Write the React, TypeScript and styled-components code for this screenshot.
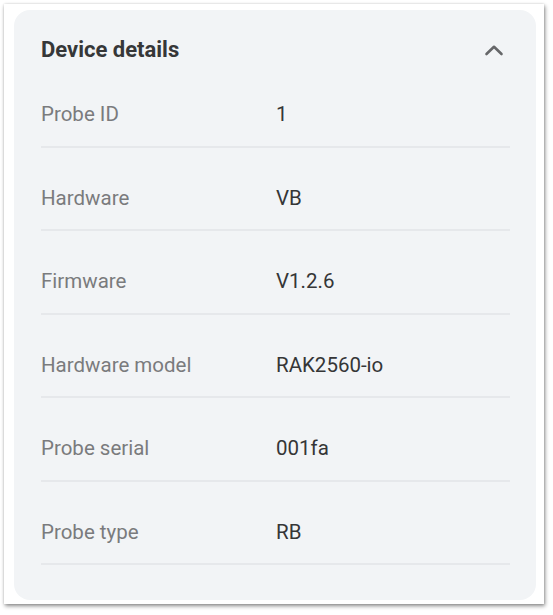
import React from "react";
import styled, { createGlobalStyle } from "styled-components";

const GlobalStyle = createGlobalStyle`
  html, body {
    margin: 0;
    padding: 0;
    background: #ffffff;
  }
  body {
    font-family: Roboto, "Liberation Sans", sans-serif;
    -webkit-font-smoothing: antialiased;
  }
`;

const Page = styled.div`
  width: 553px;
  height: 615px;
  padding: 4px 9px 11px 4px;
  box-sizing: border-box;
  background: #ffffff;
`;

const Frame = styled.div`
  height: 600px;
  box-sizing: border-box;
  background: #ffffff;
  box-shadow: 1px 2px 4px rgba(0, 0, 0, 0.45), 0 0 2px rgba(0, 0, 0, 0.12);
  padding: 6px 8px 4px 10px;
`;

const Card = styled.section`
  height: 100%;
  box-sizing: border-box;
  background: #f2f4f6;
  border-radius: 16px;
  padding: 0 26px 0 27px;
  display: flex;
  flex-direction: column;
`;

const Header = styled.div`
  display: flex;
  align-items: center;
  justify-content: space-between;
  padding: 26px 6px 0 0;
  height: 28px;
  box-sizing: content-box;
`;

const Title = styled.h2`
  margin: 0;
  font-size: 22px;
  line-height: 28px;
  font-weight: 700;
  color: #363738;
  letter-spacing: 0;
`;

const Chevron = styled.svg`
  width: 20px;
  height: 14px;
  display: block;
`;

const Row = styled.div`
  display: grid;
  grid-template-columns: 235px 1fr;
  align-items: center;
  padding: 38px 0 19.5px;
  border-bottom: 2px solid #e6e8eb;
`;

const Label = styled.span`
  font-size: 20.5px;
  line-height: 24px;
  color: #7a7b7d;
  font-weight: 400;
`;

const Value = styled.span`
  font-size: 20.5px;
  line-height: 24px;
  color: #353637;
  font-weight: 400;
`;

const rows: [string, string][] = [
  ["Probe ID", "1"],
  ["Hardware", "VB"],
  ["Firmware", "V1.2.6"],
  ["Hardware model", "RAK2560-io"],
  ["Probe serial", "001fa"],
  ["Probe type", "RB"],
];

export default function App() {
  return (
    <>
      <GlobalStyle />
      <Page>
        <Frame>
          <Card>
            <Header>
              <Title>Device details</Title>
              <Chevron viewBox="0 0 20 14" aria-hidden="true">
                <path
                  d="M2.5 11 L10 3.8 L17.5 11"
                  fill="none"
                  stroke="#666769"
                  strokeWidth="2.6"
                  strokeLinecap="round"
                  strokeLinejoin="round"
                />
              </Chevron>
            </Header>
            {rows.map(([label, value]) => (
              <Row key={label}>
                <Label>{label}</Label>
                <Value>{value}</Value>
              </Row>
            ))}
          </Card>
        </Frame>
      </Page>
    </>
  );
}
